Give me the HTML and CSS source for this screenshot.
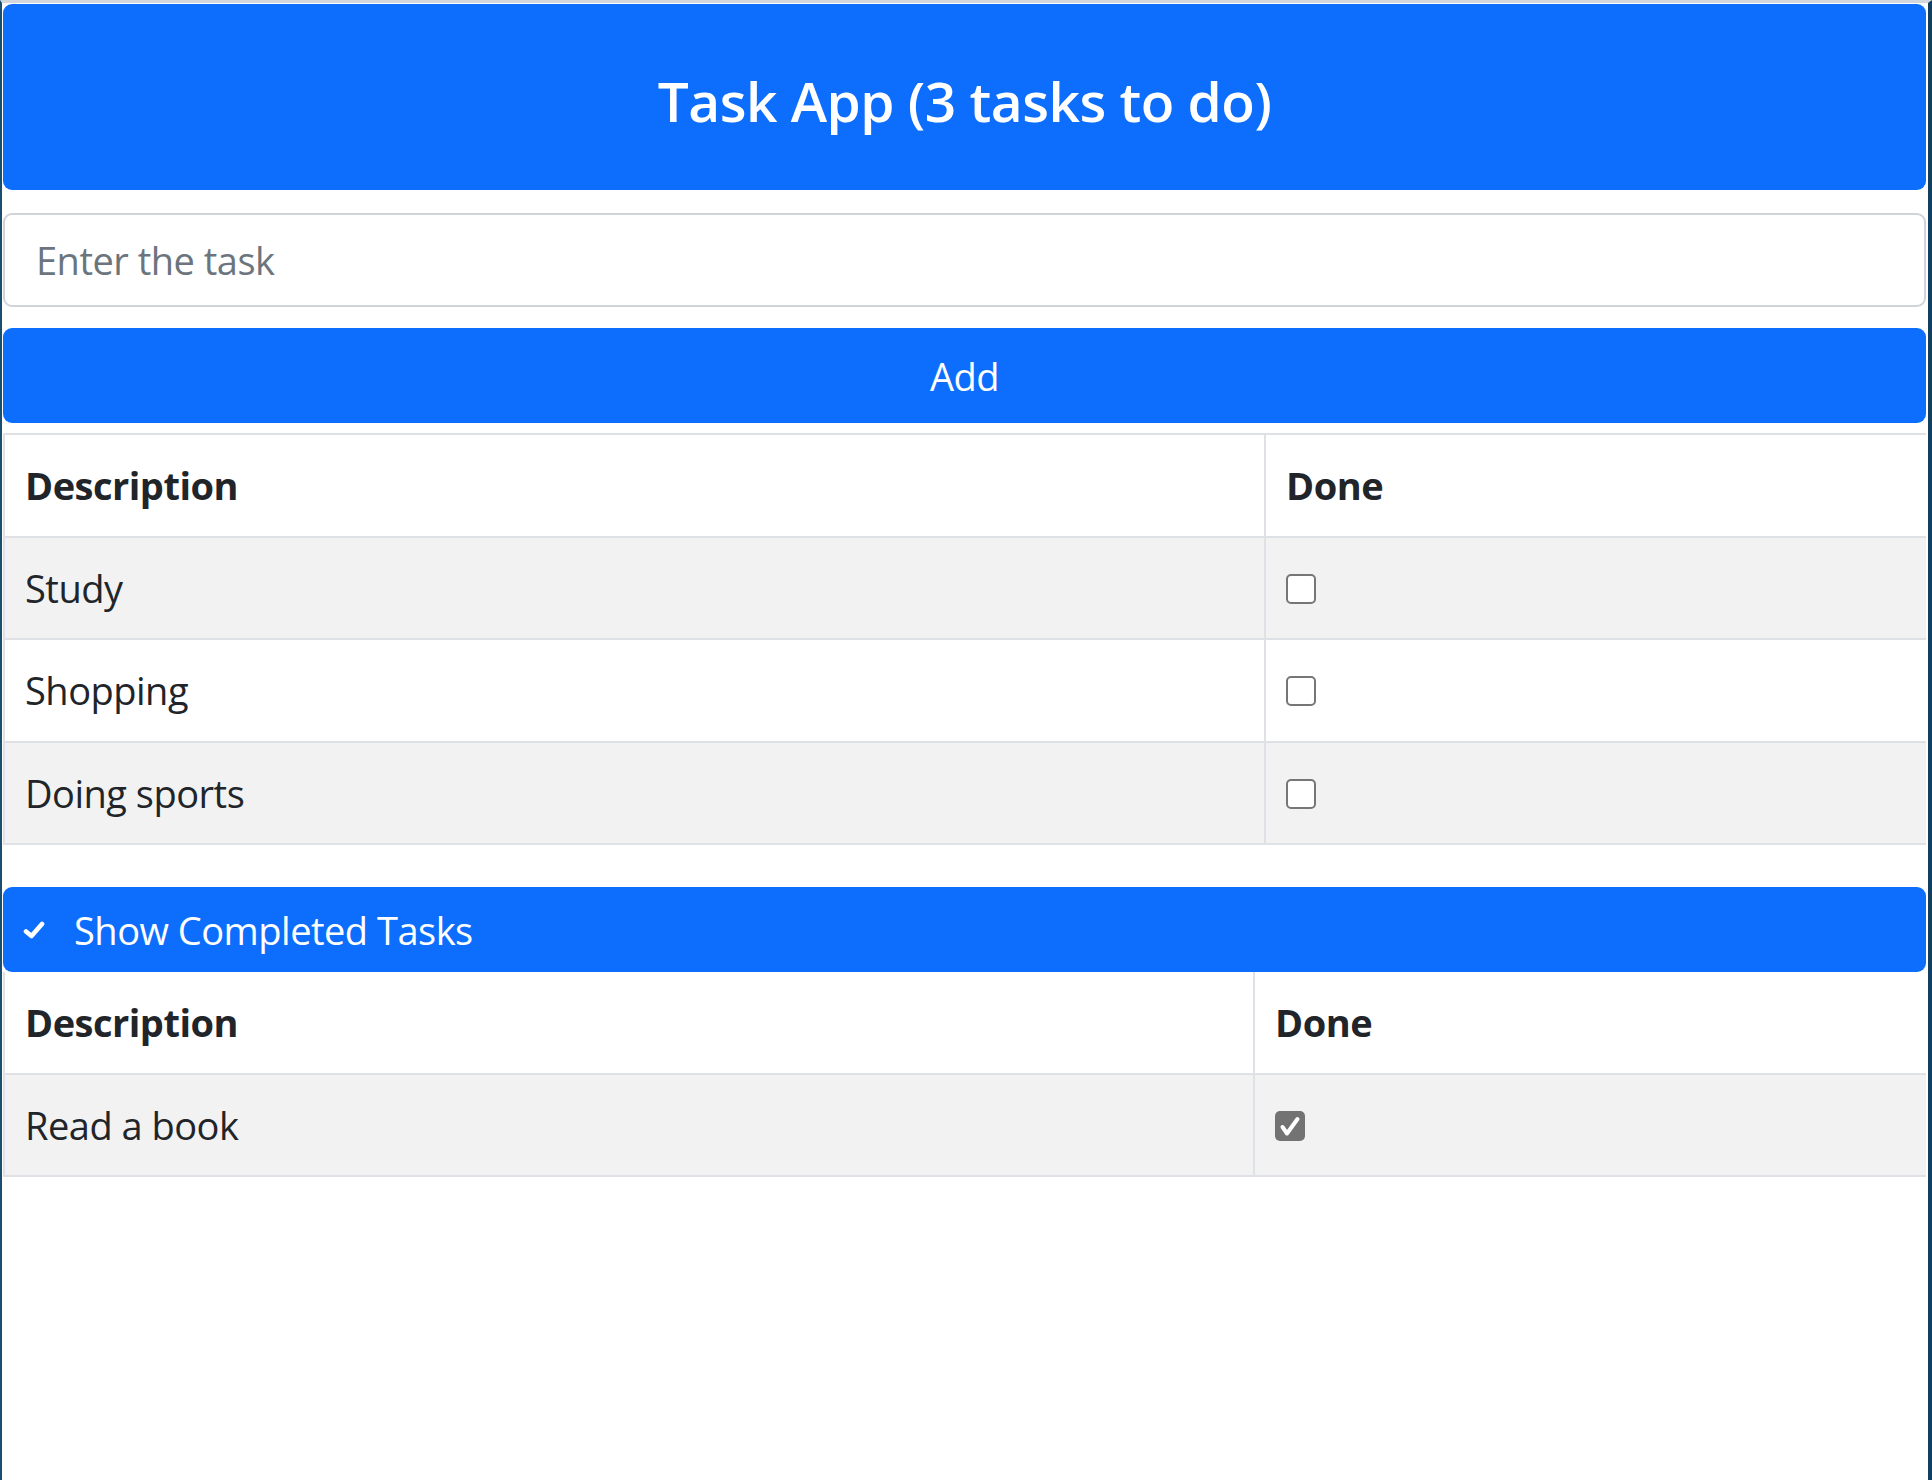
FILE: index.html
```html
<!DOCTYPE html>
<html lang="en">
<head>
<meta charset="utf-8">
<title>Task App</title>
<link rel="stylesheet" href="styles.css">
</head>
<body>
<div class="frame">
  <div class="app">
    <header class="banner">
      <h4 class="banner-title">Task App (3 tasks to do)</h4>
    </header>

    <input class="task-input" type="text" placeholder="Enter the task">
    <button class="add-btn" type="button">Add</button>

    <table class="tasks">
      <colgroup><col class="c1"><col></colgroup>
      <thead>
        <tr><th>Description</th><th>Done</th></tr>
      </thead>
      <tbody>
        <tr><td>Study</td><td><span class="cb"></span></td></tr>
        <tr><td>Shopping</td><td><span class="cb"></span></td></tr>
        <tr><td>Doing sports</td><td><span class="cb"></span></td></tr>
      </tbody>
    </table>

    <div class="toggle-bar">
      <svg class="toggle-icon" width="22" height="18" viewBox="0 0 22 18"><path d="M3 10.5 L8.5 15 L19 3" fill="none" stroke="#fff" stroke-width="4.6" stroke-linecap="round" stroke-linejoin="round"/></svg>
      <span class="toggle-label">Show Completed Tasks</span>
    </div>

    <table class="tasks done-table">
      <colgroup><col class="c1b"><col></colgroup>
      <thead>
        <tr><th>Description</th><th>Done</th></tr>
      </thead>
      <tbody>
        <tr><td>Read a book</td><td><span class="cb checked"><svg width="30" height="30" viewBox="0 0 30 30"><path d="M7.5 16 L12 22.5 L22.5 8" fill="none" stroke="#fff" stroke-width="4" stroke-linecap="round" stroke-linejoin="round"/></svg></span></td></tr>
      </tbody>
    </table>
  </div>
</div>
</body>
</html>
```

FILE: styles.css
```css
html, body {
  margin: 0;
  padding: 0;
  background: #ffffff;
}

body {
  font-family: "Segoe UI", "Open Sans", "Noto Sans", sans-serif;
  color: #212529;
  font-size: 38px;
  line-height: 60px;
  letter-spacing: -0.5px;
}

.frame {
  box-sizing: border-box;
  min-height: 1480px;
  border-top: 3px solid #d3d7dc;
  border-left: 2px solid #1b4e6e;
  border-right: 4px solid #123f60;
  padding: 1px 2px 0 1px;
}

.app {
  display: flex;
  flex-direction: column;
}

.banner {
  background: #0d6efd;
  border-radius: 9px;
  height: 186px;
  display: flex;
  align-items: center;
  justify-content: center;
  padding-top: 8px;
  box-sizing: border-box;
}

.banner-title {
  margin: 0;
  color: #ffffff;
  font-size: 55px;
  line-height: 72px;
  font-weight: 600;
  letter-spacing: -0.5px;
}

.task-input {
  margin-top: 23px;
  box-sizing: border-box;
  height: 94px;
  border: 2px solid #d0d4d8;
  border-radius: 9px;
  padding: 15px 31px;
  font-family: inherit;
  font-size: 38px;
  letter-spacing: -0.5px;
  line-height: 60px;
  color: #212529;
  outline: none;
}

.task-input::placeholder {
  color: #6c757d;
}

.add-btn {
  margin-top: 21px;
  height: 95px;
  border: none;
  border-radius: 9px;
  background: #0d6efd;
  color: #ffffff;
  font-family: inherit;
  font-size: 38px;
  letter-spacing: -0.5px;
  line-height: 60px;
  padding: 0;
}

.tasks {
  margin-top: 10px;
  width: 100%;
  border-collapse: collapse;
  table-layout: fixed;
  border-top: 2px solid #dee2e6;
  border-left: 2px solid #dee2e6;
}

.tasks .c1 { width: 1261px; }
.tasks .c1b { width: 1250px; }

.tasks th,
.tasks td {
  text-align: left;
  padding: 20px 20px 20.5px 20px;
  border-bottom: 2px solid #dee2e6;
  vertical-align: top;
}

.tasks th + th,
.tasks td + td {
  border-left: 2px solid #dee2e6;
}

.tasks th {
  font-weight: 700;
  background: #ffffff;
}

.tasks tbody tr:nth-child(odd) td {
  background: #f2f2f2;
}

.cb {
  display: inline-block;
  box-sizing: border-box;
  width: 30px;
  height: 30px;
  margin-top: 16px;
  border: 2.5px solid #767676;
  border-radius: 5px;
  background: #ffffff;
  vertical-align: top;
}

.cb.checked {
  border: none;
  background: #737373;
}

.cb.checked svg {
  display: block;
}

.toggle-bar {
  margin-top: 42px;
  height: 85px;
  box-sizing: border-box;
  background: #0d6efd;
  border-radius: 9px;
  color: #ffffff;
  display: flex;
  align-items: center;
  padding-left: 20px;
  gap: 29px;
}

.toggle-icon {
  display: block;
}

.toggle-label {
  line-height: 60px;
}

.done-table {
  margin-top: 0;
  border-top: none;
}
```
